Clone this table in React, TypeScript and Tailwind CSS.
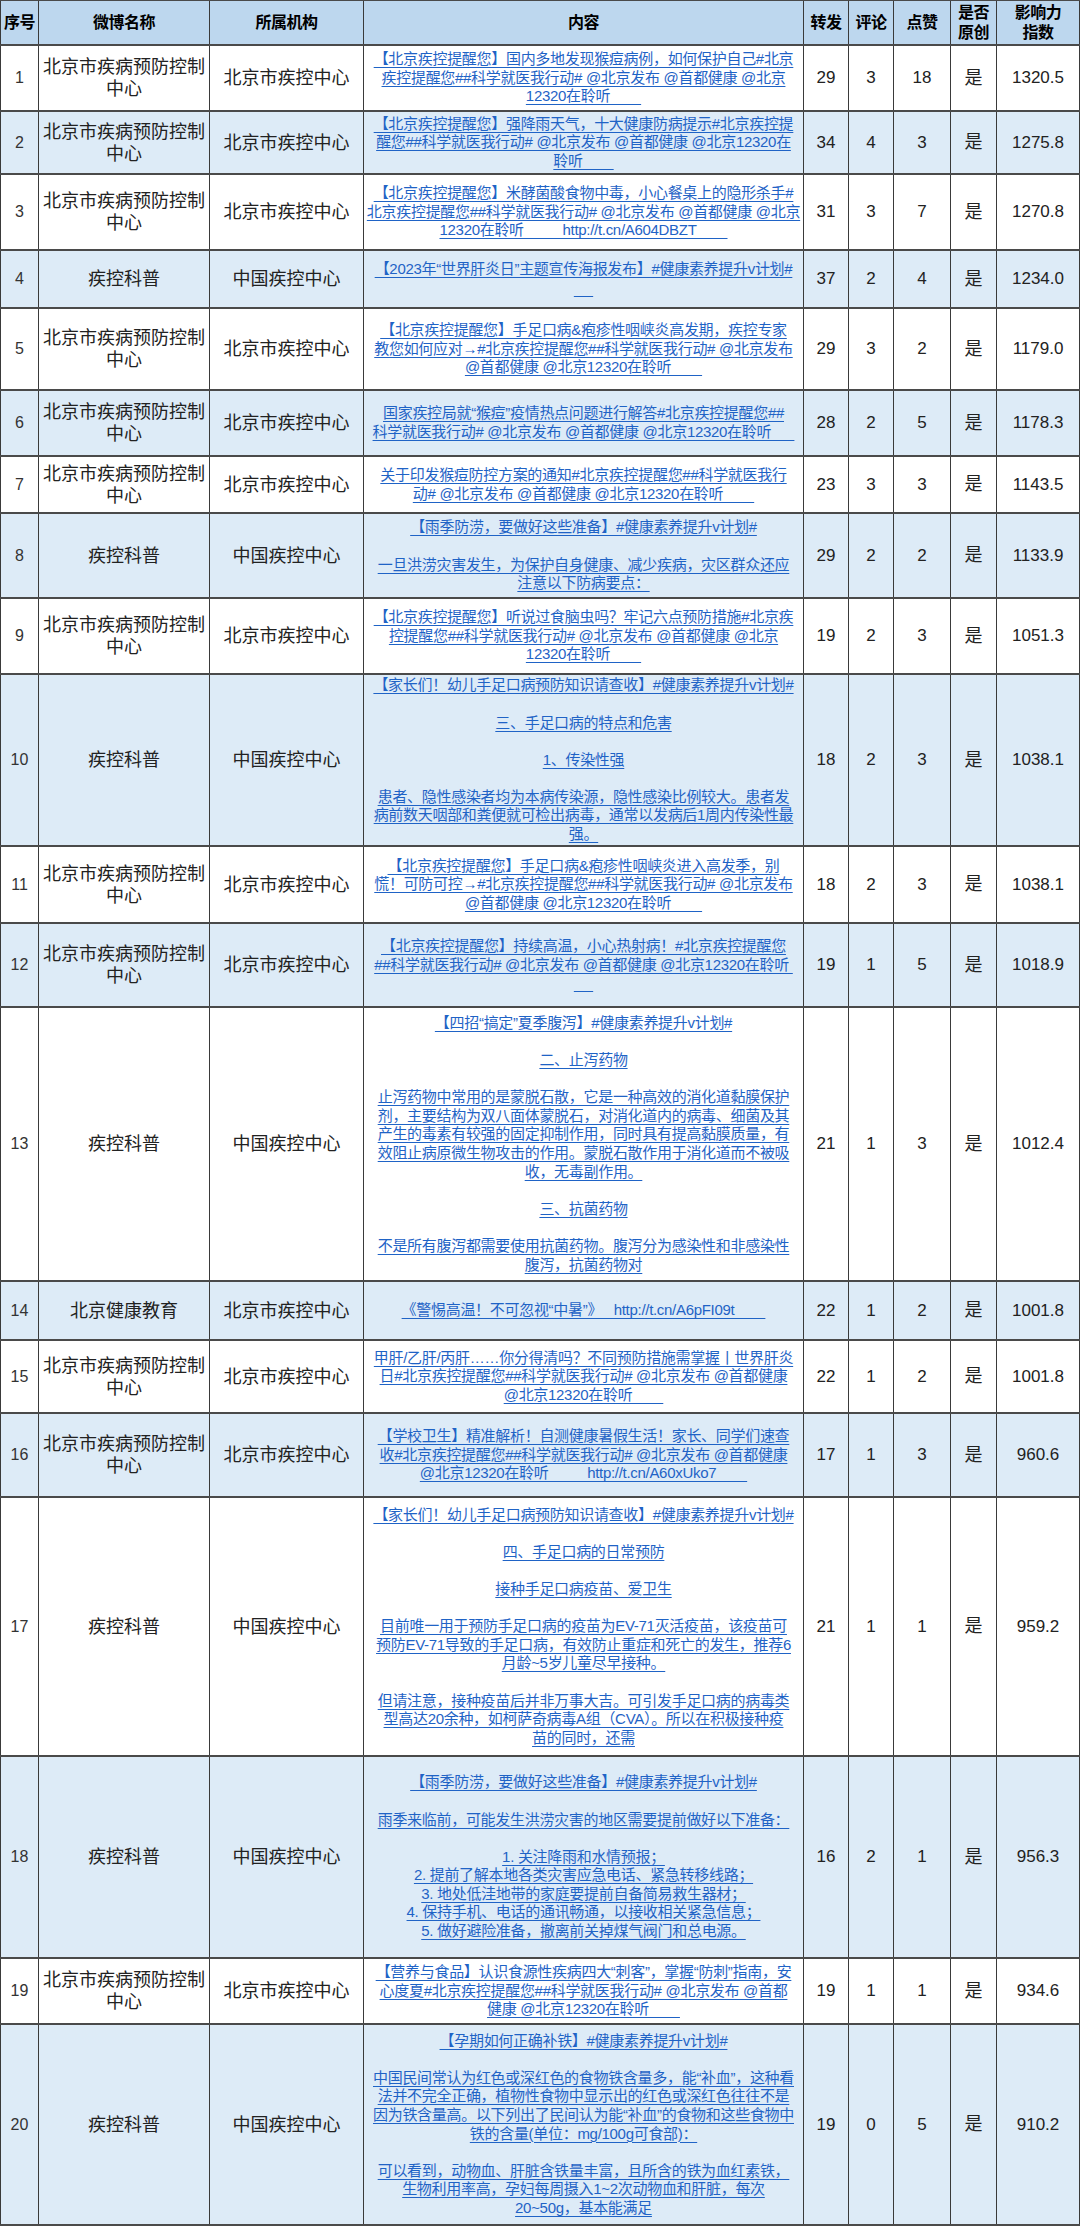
const BJ = '北京市疾病预防控制中心';
const KP = '疾控科普';
const BJCDC = '北京市疾控中心';
const CNCDC = '中国疾控中心';
const S = '\u00a0';
const sp = (n: number) => S.repeat(n);

type Row = {
  h: string;
  name: string;
  org: string;
  lines: string[];
  zf: string;
  pl: string;
  dz: string;
  yc: string;
  idx: string;
};

const rows: Row[] = [
  {
    h: 'h-[66px]',
    name: BJ,
    org: BJCDC,
    lines: [
      '【北京疾控提醒您】国内多地发现猴痘病例，如何保护自己#北京',
      '疾控提醒您##科学就医我行动# @北京发布 @首都健康 @北京',
      '12320在聆听' + sp(8),
    ],
    zf: '29', pl: '3', dz: '18', yc: '是', idx: '1320.5',
  },
  {
    h: 'h-[63px]',
    name: BJ,
    org: BJCDC,
    lines: [
      '【北京疾控提醒您】强降雨天气，十大健康防病提示#北京疾控提',
      '醒您##科学就医我行动# @北京发布 @首都健康 @北京12320在',
      '聆听' + sp(8),
    ],
    zf: '34', pl: '4', dz: '3', yc: '是', idx: '1275.8',
  },
  {
    h: 'h-[76px]',
    name: BJ,
    org: BJCDC,
    lines: [
      '【北京疾控提醒您】米酵菌酸食物中毒，小心餐桌上的隐形杀手#',
      '北京疾控提醒您##科学就医我行动# @北京发布 @首都健康 @北京',
      '12320在聆听' + sp(10) + 'http://t.cn/A604DBZT' + sp(8),
    ],
    zf: '31', pl: '3', dz: '7', yc: '是', idx: '1270.8',
  },
  {
    h: 'h-[58px]',
    name: KP,
    org: CNCDC,
    lines: ['【2023年“世界肝炎日”主题宣传海报发布】#健康素养提升v计划#', sp(5)],
    zf: '37', pl: '2', dz: '4', yc: '是', idx: '1234.0',
  },
  {
    h: 'h-[82px]',
    name: BJ,
    org: BJCDC,
    lines: [
      '【北京疾控提醒您】手足口病&疱疹性咽峡炎高发期，疾控专家',
      '教您如何应对→#北京疾控提醒您##科学就医我行动# @北京发布',
      '@首都健康 @北京12320在聆听' + sp(8),
    ],
    zf: '29', pl: '3', dz: '2', yc: '是', idx: '1179.0',
  },
  {
    h: 'h-[66px]',
    name: BJ,
    org: BJCDC,
    lines: [
      '国家疾控局就“猴痘”疫情热点问题进行解答#北京疾控提醒您##',
      '科学就医我行动# @北京发布 @首都健康 @北京12320在聆听' + sp(6),
    ],
    zf: '28', pl: '2', dz: '5', yc: '是', idx: '1178.3',
  },
  {
    h: 'h-[57px]',
    name: BJ,
    org: BJCDC,
    lines: [
      '关于印发猴痘防控方案的通知#北京疾控提醒您##科学就医我行',
      '动# @北京发布 @首都健康 @北京12320在聆听' + sp(8),
    ],
    zf: '23', pl: '3', dz: '3', yc: '是', idx: '1143.5',
  },
  {
    h: 'h-[85px]',
    name: KP,
    org: CNCDC,
    lines: [
      '【雨季防涝，要做好这些准备】#健康素养提升v计划#',
      '',
      '一旦洪涝灾害发生，为保护自身健康、减少疾病，灾区群众还应',
      '注意以下防病要点：',
    ],
    zf: '29', pl: '2', dz: '2', yc: '是', idx: '1133.9',
  },
  {
    h: 'h-[76px]',
    name: BJ,
    org: BJCDC,
    lines: [
      '【北京疾控提醒您】听说过食脑虫吗？牢记六点预防措施#北京疾',
      '控提醒您##科学就医我行动# @北京发布 @首都健康 @北京',
      '12320在聆听' + sp(8),
    ],
    zf: '19', pl: '2', dz: '3', yc: '是', idx: '1051.3',
  },
  {
    h: 'h-[172px]',
    name: KP,
    org: CNCDC,
    lines: [
      '【家长们！幼儿手足口病预防知识请查收】#健康素养提升v计划#',
      '',
      '三、手足口病的特点和危害',
      '',
      '1、传染性强',
      '',
      '患者、隐性感染者均为本病传染源，隐性感染比例较大。患者发',
      '病前数天咽部和粪便就可检出病毒，通常以发病后1周内传染性最',
      '强。',
    ],
    zf: '18', pl: '2', dz: '3', yc: '是', idx: '1038.1',
  },
  {
    h: 'h-[77px]',
    name: BJ,
    org: BJCDC,
    lines: [
      '【北京疾控提醒您】手足口病&疱疹性咽峡炎进入高发季，别',
      '慌！可防可控→#北京疾控提醒您##科学就医我行动# @北京发布',
      '@首都健康 @北京12320在聆听' + sp(8),
    ],
    zf: '18', pl: '2', dz: '3', yc: '是', idx: '1038.1',
  },
  {
    h: 'h-[84px]',
    name: BJ,
    org: BJCDC,
    lines: [
      '【北京疾控提醒您】持续高温，小心热射病！#北京疾控提醒您',
      '##科学就医我行动# @北京发布 @首都健康 @北京12320在聆听' + sp(1),
      sp(5),
    ],
    zf: '19', pl: '1', dz: '5', yc: '是', idx: '1018.9',
  },
  {
    h: 'h-[274px]',
    name: KP,
    org: CNCDC,
    lines: [
      '【四招“搞定”夏季腹泻】#健康素养提升v计划#',
      '',
      '二、止泻药物',
      '',
      '止泻药物中常用的是蒙脱石散，它是一种高效的消化道黏膜保护',
      '剂，主要结构为双八面体蒙脱石，对消化道内的病毒、细菌及其',
      '产生的毒素有较强的固定抑制作用，同时具有提高黏膜质量，有',
      '效阻止病原微生物攻击的作用。蒙脱石散作用于消化道而不被吸',
      '收，无毒副作用。',
      '',
      '三、抗菌药物',
      '',
      '不是所有腹泻都需要使用抗菌药物。腹泻分为感染性和非感染性',
      '腹泻，抗菌药物对',
    ],
    zf: '21', pl: '1', dz: '3', yc: '是', idx: '1012.4',
  },
  {
    h: 'h-[59px]',
    name: '北京健康教育',
    org: BJCDC,
    lines: ['《警惕高温！不可忽视“中暑”》' + sp(3) + 'http://t.cn/A6pFI09t' + sp(8)],
    zf: '22', pl: '1', dz: '2', yc: '是', idx: '1001.8',
  },
  {
    h: 'h-[73px]',
    name: BJ,
    org: BJCDC,
    lines: [
      '甲肝/乙肝/丙肝……你分得清吗？不同预防措施需掌握丨世界肝炎',
      '日#北京疾控提醒您##科学就医我行动# @北京发布 @首都健康',
      '@北京12320在聆听' + sp(8),
    ],
    zf: '22', pl: '1', dz: '2', yc: '是', idx: '1001.8',
  },
  {
    h: 'h-[84px]',
    name: BJ,
    org: BJCDC,
    lines: [
      '【学校卫生】精准解析！自测健康暑假生活！家长、同学们速查',
      '收#北京疾控提醒您##科学就医我行动# @北京发布 @首都健康',
      '@北京12320在聆听' + sp(10) + 'http://t.cn/A60xUko7' + sp(8),
    ],
    zf: '17', pl: '1', dz: '3', yc: '是', idx: '960.6',
  },
  {
    h: 'h-[259px]',
    name: KP,
    org: CNCDC,
    lines: [
      '【家长们！幼儿手足口病预防知识请查收】#健康素养提升v计划#',
      '',
      '四、手足口病的日常预防',
      '',
      '接种手足口病疫苗、爱卫生',
      '',
      '目前唯一用于预防手足口病的疫苗为EV-71灭活疫苗，该疫苗可',
      '预防EV-71导致的手足口病，有效防止重症和死亡的发生，推荐6',
      '月龄~5岁儿童尽早接种。',
      '',
      '但请注意，接种疫苗后并非万事大吉。可引发手足口病的病毒类',
      '型高达20余种，如柯萨奇病毒A组（CVA）。所以在积极接种疫',
      '苗的同时，还需',
    ],
    zf: '21', pl: '1', dz: '1', yc: '是', idx: '959.2',
  },
  {
    h: 'h-[202px]',
    name: KP,
    org: CNCDC,
    lines: [
      '【雨季防涝，要做好这些准备】#健康素养提升v计划#',
      '',
      '雨季来临前，可能发生洪涝灾害的地区需要提前做好以下准备：',
      '',
      '1. 关注降雨和水情预报；',
      '2. 提前了解本地各类灾害应急电话、紧急转移线路；',
      '3. 地处低洼地带的家庭要提前自备简易救生器材；',
      '4. 保持手机、电话的通讯畅通，以接收相关紧急信息；',
      '5. 做好避险准备，撤离前关掉煤气阀门和总电源。',
    ],
    zf: '16', pl: '2', dz: '1', yc: '是', idx: '956.3',
  },
  {
    h: 'h-[66px]',
    name: BJ,
    org: BJCDC,
    lines: [
      '【营养与食品】认识食源性疾病四大“刺客”，掌握“防刺”指南，安',
      '心度夏#北京疾控提醒您##科学就医我行动# @北京发布 @首都',
      '健康 @北京12320在聆听' + sp(8),
    ],
    zf: '19', pl: '1', dz: '1', yc: '是', idx: '934.6',
  },
  {
    h: 'h-[201px]',
    name: KP,
    org: CNCDC,
    lines: [
      '【孕期如何正确补铁】#健康素养提升v计划#',
      '',
      '中国民间常认为红色或深红色的食物铁含量多，能“补血”，这种看',
      '法并不完全正确，植物性食物中显示出的红色或深红色往往不是',
      '因为铁含量高。以下列出了民间认为能“补血”的食物和这些食物中',
      '铁的含量(单位：mg/100g可食部)：',
      '',
      '可以看到，动物血、肝脏含铁量丰富，且所含的铁为血红素铁，',
      '生物利用率高，孕妇每周摄入1~2次动物血和肝脏，每次',
      '20~50g，基本能满足',
    ],
    zf: '19', pl: '0', dz: '5', yc: '是', idx: '910.2',
  },
];

const cols = 'grid grid-cols-[39px_171px_154px_440px_45px_45px_57px_46px_83px]';
const cell = 'flex items-center justify-center text-center border-r border-[#3a3a3a] overflow-hidden';

function Header() {
  const heads: React.ReactNode[] = [
    '序号',
    '微博名称',
    '所属机构',
    '内容',
    '转发',
    '评论',
    '点赞',
    <>是否<br />原创</>,
    <>影响力<br />指数</>,
  ];
  return (
    <div className={`${cols} h-[46px] bg-[#bdd7ee] border-t border-b-2 border-[#4a4a4a]`}>
      {heads.map((h, i) => (
        <div
          key={i}
          className={`${cell} ${i === 0 ? 'border-l' : ''} text-[16px] leading-[20px] font-bold text-black tracking-[-0.5px]`}
        >
          <div>{h}</div>
        </div>
      ))}
    </div>
  );
}

function Content({ lines }: { lines: string[] }) {
  return (
    <div className="w-full px-[2px] text-[15px] leading-[18.6px] tracking-[-0.3px] text-[#1f63c6] whitespace-pre">
      {lines.map((l, i) => (
        <div key={i}>
          {l === '' ? (
            S
          ) : (
            <span className="underline decoration-[#1f63c6] decoration-1 underline-offset-[3px]">{l}</span>
          )}
        </div>
      ))}
    </div>
  );
}

export default function App() {
  return (
    <div className="w-[1080px] bg-white font-['Liberation_Sans','Noto_Sans_CJK_SC',sans-serif]">
      <Header />
      {rows.map((r, i) => (
        <div
          key={i}
          className={`${cols} ${r.h} ${i % 2 === 1 ? 'bg-[#ddebf7]' : 'bg-white'} border-b-2 border-[#4a4a4a]`}
        >
          <div className={`${cell} border-l text-[16px] text-[#333]`}>{i + 1}</div>
          <div className={`${cell} px-[3px] text-[18px] leading-[22px] text-[#222]`}>{r.name}</div>
          <div className={`${cell} text-[18px] leading-[22px] text-[#222]`}>{r.org}</div>
          <div className={cell}>
            <Content lines={r.lines} />
          </div>
          <div className={`${cell} text-[17px] text-[#222]`}>{r.zf}</div>
          <div className={`${cell} text-[17px] text-[#222]`}>{r.pl}</div>
          <div className={`${cell} text-[17px] text-[#222]`}>{r.dz}</div>
          <div className={`${cell} text-[18px] text-[#222]`}>{r.yc}</div>
          <div className={`${cell} text-[17px] text-[#222]`}>{r.idx}</div>
        </div>
      ))}
    </div>
  );
}
